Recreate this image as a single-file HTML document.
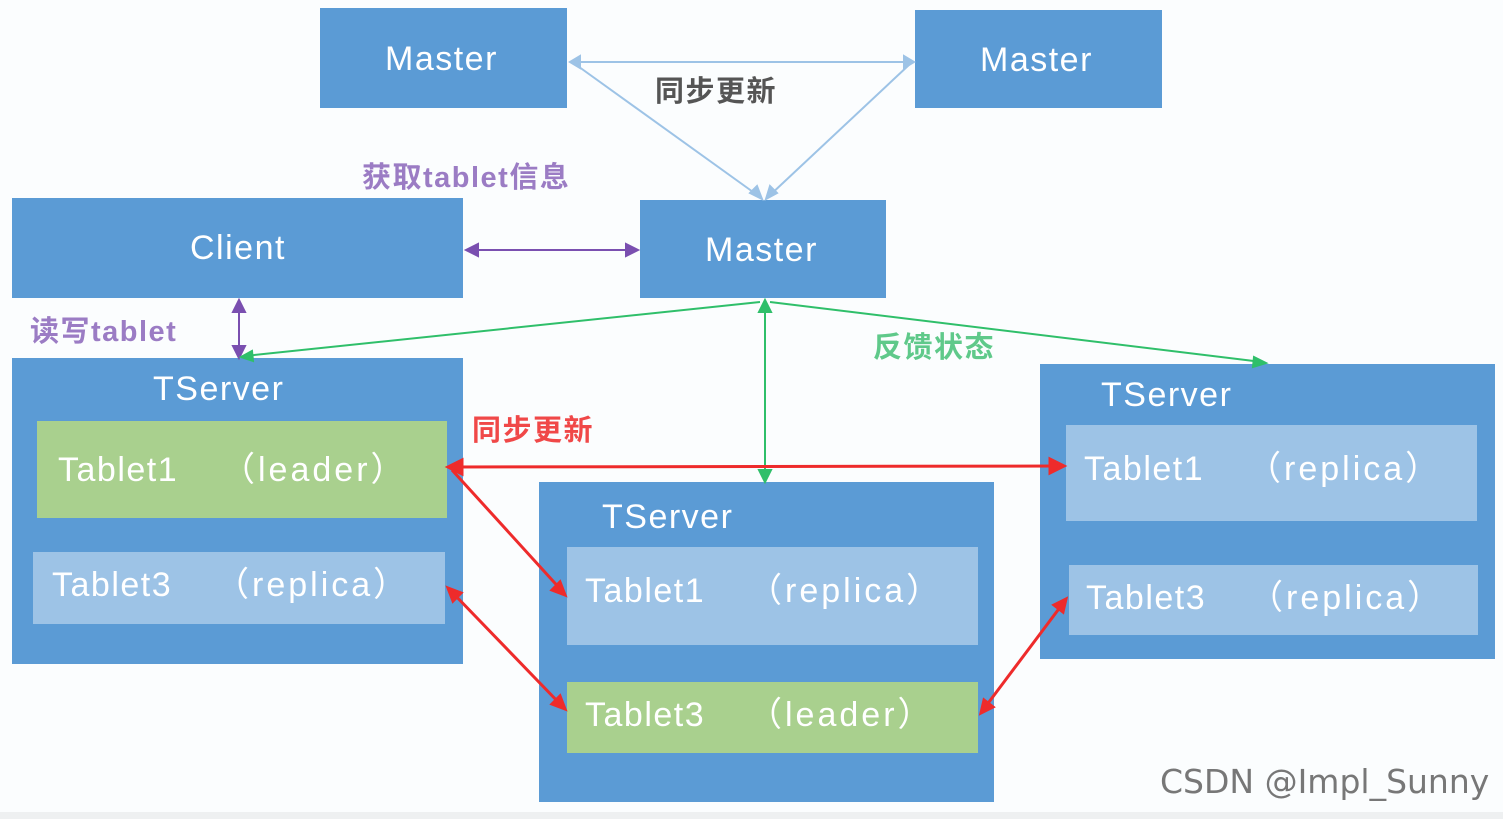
<!DOCTYPE html>
<html><head><meta charset="utf-8"><style>
html,body{margin:0;padding:0}
body{width:1503px;height:819px;position:relative;overflow:hidden;background:#fbfdfe;font-family:"Liberation Sans","Noto Sans CJK SC",sans-serif}
.b{position:absolute;background:#5b9bd5}
.g{position:absolute;background:#a9d08e}
.l{position:absolute;background:#9dc3e6}
.t{position:absolute;color:#fff;font-size:34px;letter-spacing:1.5px;white-space:pre;line-height:1}
.p{letter-spacing:3px}
.lab{position:absolute;font-size:29px;letter-spacing:1.5px;font-weight:bold;white-space:nowrap;line-height:1}
svg{position:absolute;left:0;top:0}
</style></head><body>
<div class="b" style="left:320px;top:8px;width:247px;height:100px"></div>
<div class="t" style="left:385px;top:42px">Master</div>
<div class="b" style="left:915px;top:10px;width:247px;height:98px"></div>
<div class="t" style="left:980px;top:43px">Master</div>
<div class="b" style="left:12px;top:198px;width:451px;height:100px"></div>
<div class="t" style="left:190px;top:231px">Client</div>
<div class="b" style="left:640px;top:200px;width:246px;height:98px"></div>
<div class="t" style="left:705px;top:233px">Master</div>

<div class="b" style="left:12px;top:358px;width:451px;height:306px"></div>
<div class="t" style="left:153px;top:372px">TServer</div>
<div class="g" style="left:37px;top:421px;width:410px;height:97px"></div>
<div class="t" style="left:58px;top:453px">Tablet1</div><div class="t p" style="left:221px;top:453px">（leader）</div>
<div class="l" style="left:33px;top:552px;width:412px;height:72px"></div>
<div class="t" style="left:52px;top:568px">Tablet3</div><div class="t p" style="left:215px;top:568px">（replica）</div>

<div class="b" style="left:539px;top:482px;width:455px;height:320px"></div>
<div class="t" style="left:602px;top:500px">TServer</div>
<div class="l" style="left:567px;top:547px;width:411px;height:98px"></div>
<div class="t" style="left:585px;top:574px">Tablet1</div><div class="t p" style="left:748px;top:574px">（replica）</div>
<div class="g" style="left:567px;top:682px;width:411px;height:71px"></div>
<div class="t" style="left:585px;top:698px">Tablet3</div><div class="t p" style="left:748px;top:698px">（leader）</div>

<div class="b" style="left:1040px;top:364px;width:455px;height:295px"></div>
<div class="t" style="left:1101px;top:378px">TServer</div>
<div class="l" style="left:1066px;top:425px;width:411px;height:96px"></div>
<div class="t" style="left:1084px;top:452px">Tablet1</div><div class="t p" style="left:1247px;top:452px">（replica）</div>
<div class="l" style="left:1069px;top:565px;width:409px;height:70px"></div>
<div class="t" style="left:1086px;top:581px">Tablet3</div><div class="t p" style="left:1249px;top:581px">（replica）</div>

<div class="lab" style="left:655px;top:78px;color:#555">同步更新</div>
<div class="lab" style="left:362px;top:164px;color:#9b7cc4">获取tablet信息</div>
<div class="lab" style="left:30px;top:318px;color:#9b7cc4">读写tablet</div>
<div class="lab" style="left:873px;top:334px;color:#5fc98a">反馈状态</div>
<div class="lab" style="left:472px;top:417px;color:#f04848">同步更新</div>

<svg width="1503" height="819" viewBox="0 0 1503 819">
<g stroke="#9dc3e6" stroke-width="2" fill="#9dc3e6">
<line x1="575" y1="62" x2="910" y2="62"/>
<line x1="575" y1="64" x2="760" y2="197"/>
<line x1="910" y1="64" x2="768" y2="197"/>
<polygon points="570,62 580,56 580,68"/><polygon points="914,62 904,56 904,68"/>
<polygon points="762,199 750,193 757,186"/><polygon points="766,199 770,186 777,193"/>
</g>
<g stroke="#7a4fb0" stroke-width="2" fill="#7a4fb0">
<line x1="470" y1="250" x2="634" y2="250"/>
<polygon points="466,250 478,244 478,256"/><polygon points="638,250 626,244 626,256"/>
<line x1="239" y1="304" x2="239" y2="354"/>
<polygon points="239,300 233,312 245,312"/><polygon points="239,358 233,346 245,346"/>
</g>
<g stroke="#2fbf6a" stroke-width="2" fill="#2fbf6a">
<line x1="245" y1="356" x2="760" y2="302"/>
<line x1="770" y1="302" x2="1262" y2="362"/>
<line x1="765" y1="304" x2="765" y2="478"/>
<polygon points="765,300 759,312 771,312"/><polygon points="765,482 759,470 771,470"/>
<polygon points="241,357 252,351 253,361"/><polygon points="1266,363 1254,357 1253,367"/>
</g>
<g stroke="#ee2b2b" stroke-width="3" fill="#ee2b2b">
<line x1="452" y1="467" x2="1060" y2="466"/>
<polygon points="448,467 462,460 462,474"/><polygon points="1064,466 1050,459 1050,473"/>
<line x1="452" y1="470" x2="563" y2="592"/>
<polygon points="565,595 552,590 560,582"/>
<line x1="450" y1="590" x2="563" y2="707"/>
<polygon points="448,588 461,593 453,601"/><polygon points="565,709 552,704 560,696"/>
<line x1="983" y1="710" x2="1064" y2="602"/>
<polygon points="981,713 984,700 993,707"/><polygon points="1066,599 1063,612 1054,605"/>
</g>
</svg>
<div style="position:absolute;left:1160px;top:762px;font-family:'DejaVu Sans',sans-serif;font-size:33px;color:#777;white-space:nowrap">CSDN @Impl_Sunny</div>
<div style="position:absolute;left:0;top:812px;width:1503px;height:7px;background:#eef0f1"></div>
</body></html>
